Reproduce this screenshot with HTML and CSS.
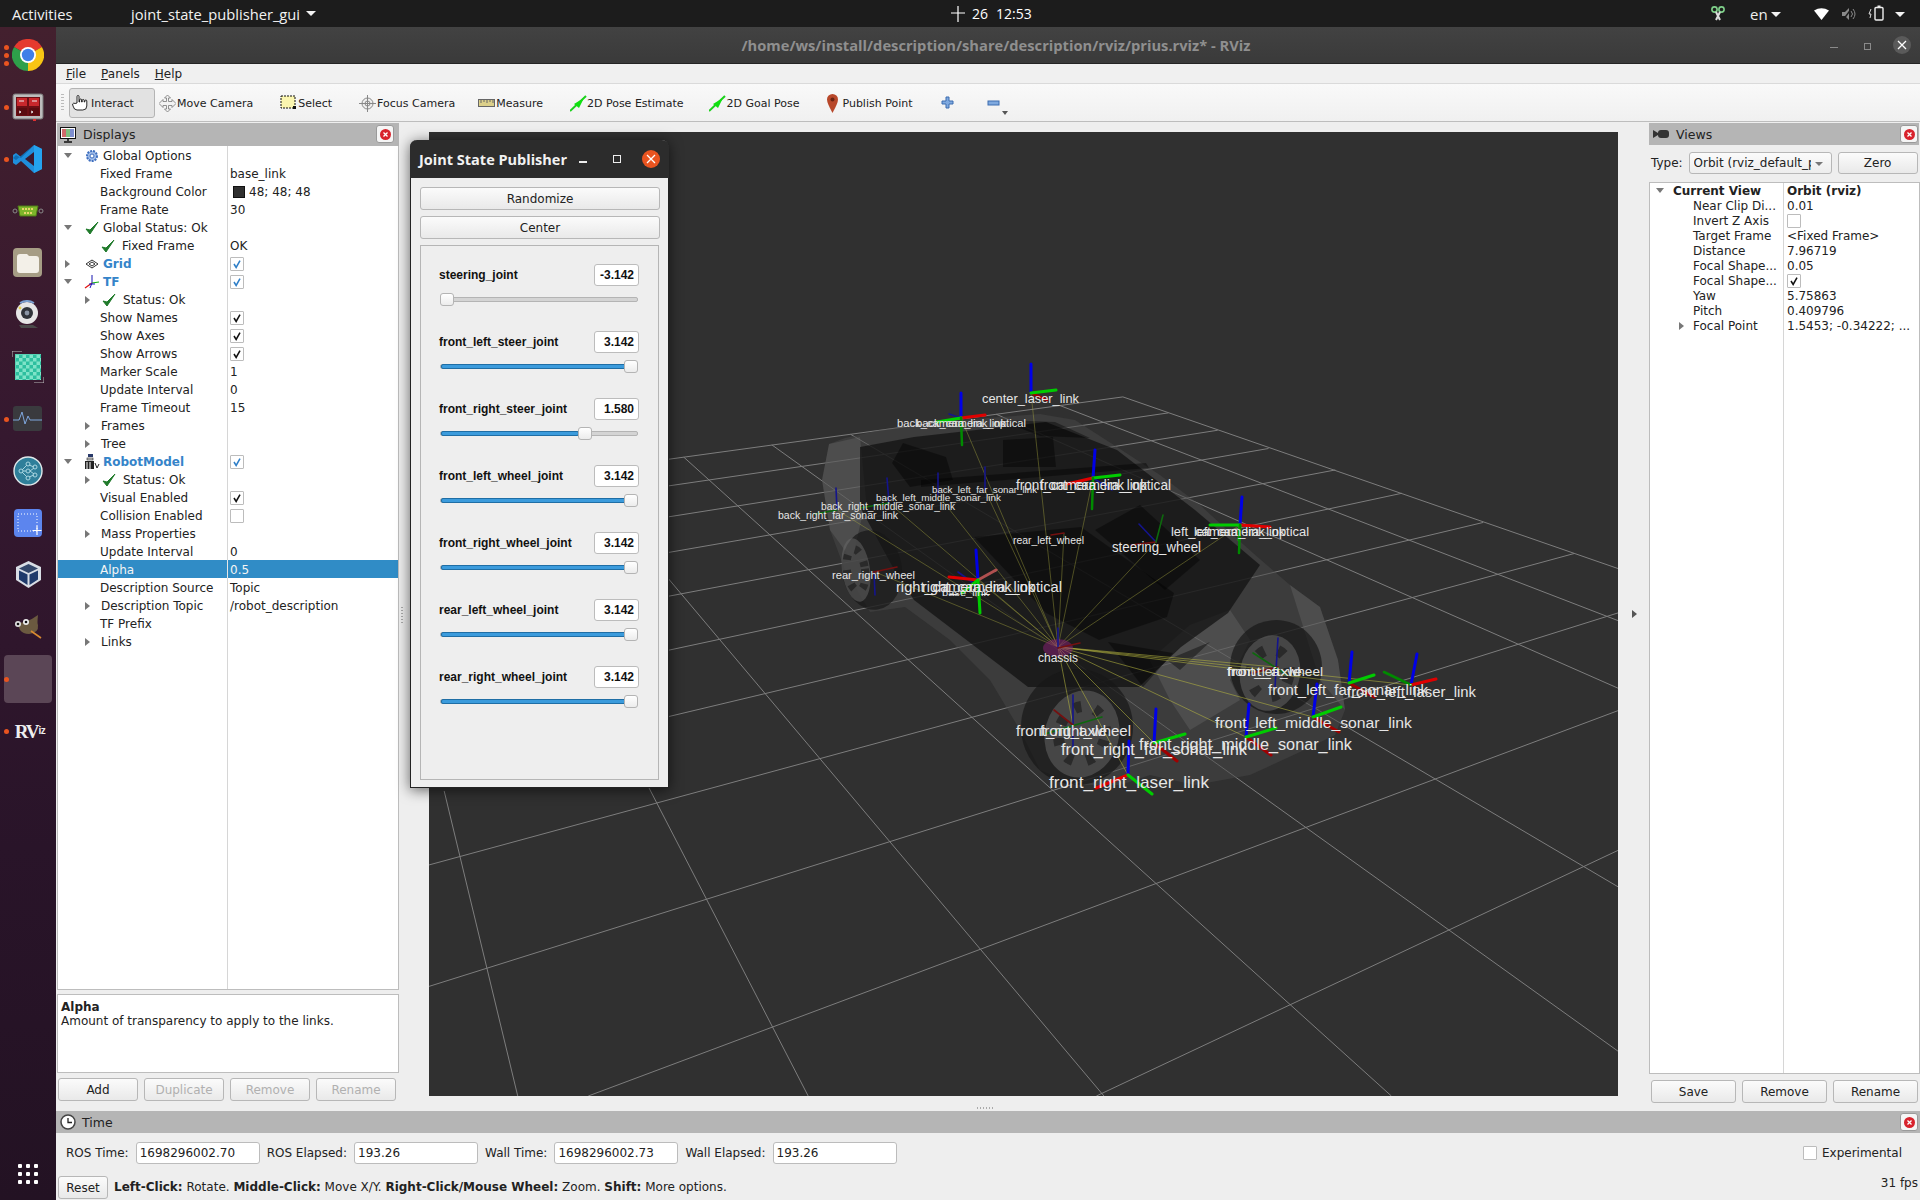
FILE: index.html
```html
<!DOCTYPE html>
<html lang="en">
<head>
<meta charset="utf-8">
<title>RViz</title>
<link rel="stylesheet" href="styles.css">
</head>
<body>
<header class="topbar">
  <span class="activities">Activities</span>
  <span class="appname">joint_state_publisher_gui<i class="caret"></i></span>
  <div class="clock">
    <svg class="clockplus" width="14" height="16" viewBox="0 0 14 16"><path d="M7 0v16M0 7h14" stroke="#fff" stroke-width="1.2"/></svg>
    <span>26</span><span class="time">12:53</span>
  </div>
  <div class="tray">
    <svg class="t-scissor" width="14" height="16" viewBox="0 0 14 16"><circle cx="3.5" cy="3.5" r="2.6" fill="none" stroke="#7fd08a" stroke-width="1.6"/><circle cx="10.5" cy="3.5" r="2.6" fill="none" stroke="#7fd08a" stroke-width="1.6"/><path d="M5 6l4 8M9 6l-4 8" stroke="#ddd" stroke-width="2"/></svg>
    <span class="t-en">en</span><i class="caret t-c1"></i>
    <svg class="t-wifi" width="15" height="12" viewBox="0 0 15 12"><path d="M0 2.5Q7.5-2 15 2.5L7.5 12Z" fill="#fff"/></svg>
    <svg class="t-vol" width="14" height="14" viewBox="0 0 14 14"><path d="M0 5h3l4-4v12l-4-4H0z" fill="#8a8a8a"/><path d="M9 4q3 3 0 6M11 2q4 5 0 10" stroke="#8a8a8a" fill="none"/><path d="M1 13L10 1" stroke="#1c1c1c" stroke-width="1.4"/></svg>
    <svg class="t-bat" width="16" height="16" viewBox="0 0 16 16"><path d="M3 4L1 9h2l-1 4" stroke="#ddd" fill="none"/><rect x="7" y="2.5" width="8" height="12.5" rx="1" fill="none" stroke="#eee" stroke-width="1.4"/><rect x="9.5" y="0.5" width="3" height="2" fill="#eee"/></svg>
    <i class="caret t-c2"></i>
  </div>
</header>

<div class="desktop">
  <nav class="dock">
    <div class="slot"><i class="dot d1"></i><i class="dot d2"></i><i class="dot d3"></i>
      <svg class="ico" width="32" height="32" viewBox="0 0 32 32"><path d="M16 16L2.1 8A16 16 0 0 1 29.9 8Z" fill="#e53a2f"/><path d="M16 16L29.9 8A16 16 0 0 1 16 32Z" fill="#f8c514"/><path d="M16 16L16 32A16 16 0 0 1 2.1 8Z" fill="#2ea04a"/><circle cx="16" cy="16" r="8" fill="#fff"/><circle cx="16" cy="16" r="6.2" fill="#3f7fe8"/></svg></div>
    <div class="slot"><i class="dot"></i>
      <svg class="ico" width="32" height="28" viewBox="0 0 32 28"><rect x="1" y="1" width="30" height="25" rx="2" fill="#bcbcbc" stroke="#777"/><rect x="4" y="4" width="24" height="19" fill="#6d0f14"/><rect x="5" y="5" width="10" height="8" fill="#c8282c"/><rect x="17" y="5" width="10" height="8" fill="#c8282c"/><rect x="5" y="15" width="10" height="7" fill="#5a0c10"/><rect x="17" y="15" width="10" height="7" fill="#5a0c10"/><path d="M7 8h5M20 8h5M7 18l2 1-2 1M19 18l2 1-2 1" stroke="#eee" fill="none"/><rect x="21" y="26" width="3" height="2" fill="#e03030"/></svg></div>
    <div class="slot"><i class="dot"></i>
      <svg class="ico" width="30" height="30" viewBox="0 0 30 30"><path d="M21 1l8 4v20l-8 4L8 17l-5 4-3-2v-8l3-2 5 4Z" fill="#1f8fdc"/><path d="M21 1l8 4v20l-8 4Z" fill="#24a3ef"/><path d="M21 8v14l-9-7Z" fill="#3a1a30"/><path d="M21 1L3 16l-3-2 3-3 5 3Z" fill="#0f6fb4"/></svg></div>
    <div class="slot">
      <svg class="ico" width="32" height="14" viewBox="0 0 32 14"><circle cx="3" cy="7" r="2" fill="none" stroke="#888"/><circle cx="29" cy="7" r="2" fill="none" stroke="#888"/><path d="M6 2h20l-2 10H8Z" fill="#7db52a" stroke="#4f7a18"/><path d="M10 5h12M12 9h8" stroke="#e6d56a" stroke-width="2" stroke-dasharray="2 1"/></svg></div>
    <div class="slot">
      <svg class="ico" width="30" height="30" viewBox="0 0 30 30"><rect width="29" height="29" rx="4" fill="#a69d85"/><path d="M4 9q0-3 3-3h7l2 2h7q3 0 3 3v11q0 3-3 3H7q-3 0-3-3Z" fill="#f3f0e8"/></svg></div>
    <div class="slot">
      <svg class="ico" width="26" height="30" viewBox="0 0 26 30"><circle cx="12" cy="13" r="11" fill="#e6e6e6"/><path d="M5 3q7-4 14 0" stroke="#7aa0d0" stroke-width="2" fill="none"/><circle cx="12" cy="13" r="6" fill="#30343a"/><circle cx="12" cy="13" r="2.4" fill="#8a95a5"/><circle cx="5" cy="8" r="1.4" fill="#e0d050"/><path d="M4 25h14l5 3H6Z" fill="#4a4a4a"/></svg></div>
    <div class="slot">
      <svg class="ico" width="32" height="32" viewBox="0 0 32 32"><defs><pattern id="chk" width="7" height="7" patternUnits="userSpaceOnUse"><rect width="7" height="7" fill="#2dbf9f"/><rect width="3.5" height="3.5" fill="#7fe3c8"/><rect x="3.5" y="3.5" width="3.5" height="3.5" fill="#7fe3c8"/></pattern></defs><rect x="3" y="3" width="26" height="26" fill="url(#chk)"/><path d="M0 6V0h10M32 26v6H22" stroke="#bbb" fill="none"/></svg></div>
    <div class="slot"><i class="dot"></i>
      <svg class="ico" width="30" height="26" viewBox="0 0 30 26"><rect width="29" height="25" rx="3" fill="#3a3a3e"/><path d="M0 14h6l3-8 3 12 3-8 2 4h12" stroke="#7fa7dd" fill="none"/></svg></div>
    <div class="slot">
      <svg class="ico" width="30" height="30" viewBox="0 0 30 30"><circle cx="15" cy="15" r="14" fill="#2f7f9a" stroke="#dfe8ea" stroke-width="1.4"/><g fill="none" stroke="#a9d5e0"><circle cx="8" cy="15" r="2"/><circle cx="15" cy="8" r="2"/><circle cx="15" cy="15" r="2"/><circle cx="15" cy="22" r="2"/><circle cx="22" cy="11" r="2"/><circle cx="22" cy="19" r="2"/><path d="M9 14l5-5M9 16l5 5M10 15h3M16 9l5 2M17 15l4-3M17 15l4 3M16 21l5-2"/></g></svg></div>
    <div class="slot">
      <svg class="ico" width="29" height="29" viewBox="0 0 29 29"><rect width="28" height="28" rx="4" fill="#5c85ee"/><rect x="4" y="5" width="19" height="17" fill="none" stroke="#fff" stroke-dasharray="1 2"/><path d="M23 17v9M18.500 21.500h9" stroke="#fff" stroke-width="1.2"/></svg></div>
    <div class="slot">
      <svg class="ico" width="27" height="30" viewBox="0 0 27 30"><path d="M13.500 1L26 7v13l-12.500 8L1 20V7Z" fill="#d8dde5"/><path d="M13.500 4L23 8.500 13.500 13 4 8.500Z" fill="#33476b"/><path d="M4 10.500l8.500 4V25L4 19.500ZM23 10.500l-8.500 4V25l8.500-5.500Z" fill="#1f3a6b"/></svg></div>
    <div class="slot">
      <svg class="ico" width="30" height="24" viewBox="0 0 30 24"><path d="M4 8Q14 8 25 0q-1 9 0 10 1 8-9 9-6 0-9-4Z" fill="#6b5a40"/><circle cx="5" cy="9" r="3" fill="#ddd"/><circle cx="13" cy="7" r="3" fill="#eee"/><circle cx="5" cy="9" r="1.300" fill="#111"/><circle cx="13" cy="7" r="1.300" fill="#111"/><path d="M18 16l10 7" stroke="#d98a30" stroke-width="1.600"/></svg></div>
    <div class="slot"><i class="dot dot-active"></i><div class="active"></div></div>
    <div class="slot"><i class="dot"></i><span class="rvizlogo">RV<small>iz</small></span></div>
    <svg class="grid9" width="21" height="21" viewBox="0 0 21 21"><g fill="#fff"><rect width="4" height="4" rx="1"/><rect x="8" width="4" height="4" rx="1"/><rect x="16" width="4" height="4" rx="1"/><rect y="8" width="4" height="4" rx="1"/><rect x="8" y="8" width="4" height="4" rx="1"/><rect x="16" y="8" width="4" height="4" rx="1"/><rect y="16" width="4" height="4" rx="1"/><rect x="8" y="16" width="4" height="4" rx="1"/><rect x="16" y="16" width="4" height="4" rx="1"/></g></svg>
  </nav>

  <div class="window">
    <div class="titlebar">
      <span class="wintitle">/home/ws/install/description/share/description/rviz/prius.rviz* - RViz</span>
      <i class="w-min"></i><i class="w-max"></i>
      <span class="w-close"><svg width="10" height="10" viewBox="0 0 10 10"><path d="M1 1l8 8M9 1l-8 8" stroke="#fff" stroke-width="1.300"/></svg></span>
    </div>
    <div class="menubar"><span><u>F</u>ile</span><span><u>P</u>anels</span><span><u>H</u>elp</span></div>
    <div class="toolbar">
      <i class="handle"></i>
      <div class="tool tool-on">
        <svg width="18" height="18" viewBox="0 0 18 18"><path d="M5 9V2.500a1 1 0 0 1 2 0V8h.6V6a1 1 0 0 1 2 0v2h.6V6.500a1 1 0 0 1 2 0V8h.6V7a1 1 0 0 1 2 0v5q0 4-4 4H5q-3 0-4-4l-.4-2q1-1.500 2.500-.5Z" fill="#fff" stroke="#111" stroke-width=".9"/></svg>
        <span>Interact</span></div>
      <div class="tool t-move">
        <svg width="17" height="17" viewBox="0 0 17 17"><path d="M8.500 0l3 3h-2v3.500H13v-2l4 4-4 4v-2H9.500V14h2l-3 3-3-3h2v-3.500H4v2l-4-4 4-4v2h3.500V3h-2Z" fill="#f2f2f2" stroke="#777" stroke-width=".8"/></svg>
        <span>Move Camera</span></div>
      <div class="tool">
        <svg width="17" height="17" viewBox="0 0 17 17"><rect x="1" y="1" width="14" height="12" fill="#fbf6b0" stroke="#111" stroke-dasharray="2 1"/><rect x="13" y="11" width="3" height="3" fill="#111"/></svg>
        <span>Select</span></div>
      <div class="tool">
        <svg width="17" height="17" viewBox="0 0 17 17"><circle cx="8.500" cy="8.500" r="5.500" fill="#eee" stroke="#888"/><circle cx="8.500" cy="8.500" r="2.500" fill="none" stroke="#888"/><path d="M8.500 0v17M0 8.500h17" stroke="#888"/></svg>
        <span>Focus Camera</span></div>
      <div class="tool t-measure">
        <svg width="17" height="9" viewBox="0 0 17 9"><rect x=".5" y=".5" width="16" height="7" fill="#dcd08a" stroke="#666"/><path d="M3 1v3M6 1v2M9 1v3M12 1v2M15 1v3" stroke="#666"/></svg>
        <span>Measure</span></div>
      <div class="tool t-arrow">
        <svg width="17" height="17" viewBox="0 0 17 17"><path d="M0 16L16 1" stroke="#1bd11b" stroke-width="2"/><path d="M4 9l5 4 5-10Z" fill="#11e011"/></svg>
        <span>2D Pose Estimate</span></div>
      <div class="tool t-arrow">
        <svg width="17" height="17" viewBox="0 0 17 17"><path d="M0 16L16 1" stroke="#1bd11b" stroke-width="2"/><path d="M4 9l5 4 5-10Z" fill="#11e011"/></svg>
        <span>2D Goal Pose</span></div>
      <div class="tool t-pin">
        <svg width="11" height="19" viewBox="0 0 11 19"><path d="M5.500 19Q0 9 0 5.500a5.500 5.500 0 0 1 11 0Q11 9 5.500 19Z" fill="#b8482a"/><circle cx="5.500" cy="5.500" r="2" fill="#6a2412"/></svg>
        <span>Publish Point</span></div>
      <div class="tool t-ic"><svg width="14" height="14" viewBox="0 0 14 14"><path d="M5 1h3v4h4v3H8v4H5V8H1V5h4Z" fill="#7fa9df" stroke="#3c6cb0"/></svg></div>
      <div class="tool t-ic t-minus"><svg width="14" height="6" viewBox="0 0 14 6"><rect x="1" y="1" width="11" height="4" fill="#7fa9df" stroke="#3c6cb0"/></svg></div>
      <i class="more"></i>
    </div>

    <div class="main">
      <section class="displays">
        <div class="dockhead">
          <svg width="16" height="16" viewBox="0 0 16 16"><rect x=".5" y=".5" width="15" height="11" fill="#fff" stroke="#111"/><rect x="2" y="2" width="4" height="8" fill="#d06a6a"/><rect x="6" y="2" width="4" height="8" fill="#7fc07f"/><rect x="10" y="2" width="4" height="8" fill="#7f8fd0"/><path d="M8 12v2M4 15h8" stroke="#111" stroke-width="1.500"/></svg>
          <span>Displays</span>
          <span class="closebtn"><svg width="11" height="11" viewBox="0 0 11 11"><circle cx="5.500" cy="5.500" r="5.500" fill="#d8222c"/><path d="M3.500 3.500l4 4M7.500 3.500l-4 4" stroke="#fff" stroke-width="1.300"/></svg></span>
        </div>
        <div class="tree">
          <div class="row"><div class="name l0"><i class="ar down"></i><svg class="ricon" width="14" height="14" viewBox="0 0 14 14"><circle cx="7" cy="7" r="5" fill="#9fbce8" stroke="#3f6fbf" stroke-width="2" stroke-dasharray="2 1"/><circle cx="7" cy="7" r="2" fill="#fff" stroke="#3f6fbf"/></svg><span>Global Options</span></div><div class="val"></div></div>
          <div class="row"><div class="name l1">Fixed Frame</div><div class="val">base_link</div></div>
          <div class="row"><div class="name l1">Background Color</div><div class="val"><i class="swatch"></i>48; 48; 48</div></div>
          <div class="row"><div class="name l1">Frame Rate</div><div class="val">30</div></div>
          <div class="row"><div class="name l0"><i class="ar down"></i><svg class="ricon" width="14" height="14" viewBox="0 0 14 14"><path d="M1 8l4 5L13 1 5 9Z" fill="#1f7a2a" stroke="#1f7a2a"/></svg><span>Global Status: Ok</span></div><div class="val"></div></div>
          <div class="row"><div class="name lc"><svg class="ricon2" width="14" height="14" viewBox="0 0 14 14"><path d="M1 8l4 5L13 1 5 9Z" fill="#1f7a2a" stroke="#1f7a2a"/></svg><span>Fixed Frame</span></div><div class="val">OK</div></div>
          <div class="row"><div class="name l0"><i class="ar right"></i><svg class="ricon" width="14" height="10" viewBox="0 0 14 10"><path d="M7 1l6 4-6 4-6-4ZM4 5l3-2 3 2-3 2Z" fill="none" stroke="#333"/></svg><span class="on">Grid</span></div><div class="val"><svg class="cb" viewBox="0 0 14 14"><path class="ck-b" d="M3.500 7l2.500 4 4.500-8"/></svg></div></div>
          <div class="row"><div class="name l0"><i class="ar down"></i><svg class="ricon" width="16" height="14" viewBox="0 0 16 14"><path d="M8 8V0" stroke="#1515b0"/><path d="M8 8l7-1" stroke="#10b010" stroke-width="1.200"/><path d="M8 8L1 13" stroke="#e01010" stroke-width="1.200"/><path d="M8 8l-2 5M5 9h6" stroke="#1a1ac0"/></svg><span class="on">TF</span></div><div class="val"><svg class="cb" viewBox="0 0 14 14"><path class="ck-b" d="M3.500 7l2.500 4 4.500-8"/></svg></div></div>
          <div class="row"><div class="name lca"><i class="ar right"></i><svg class="ricon2" width="14" height="14" viewBox="0 0 14 14"><path d="M1 8l4 5L13 1 5 9Z" fill="#1f7a2a" stroke="#1f7a2a"/></svg><span>Status: Ok</span></div><div class="val"></div></div>
          <div class="row"><div class="name l1">Show Names</div><div class="val"><svg class="cb" viewBox="0 0 14 14"><path class="ck" d="M3.500 7l2.500 4 4.500-8"/></svg></div></div>
          <div class="row"><div class="name l1">Show Axes</div><div class="val"><svg class="cb" viewBox="0 0 14 14"><path class="ck" d="M3.500 7l2.500 4 4.500-8"/></svg></div></div>
          <div class="row"><div class="name l1">Show Arrows</div><div class="val"><svg class="cb" viewBox="0 0 14 14"><path class="ck" d="M3.500 7l2.500 4 4.500-8"/></svg></div></div>
          <div class="row"><div class="name l1">Marker Scale</div><div class="val">1</div></div>
          <div class="row"><div class="name l1">Update Interval</div><div class="val">0</div></div>
          <div class="row"><div class="name l1">Frame Timeout</div><div class="val">15</div></div>
          <div class="row"><div class="name la"><i class="ar right"></i>Frames</div><div class="val"></div></div>
          <div class="row"><div class="name la"><i class="ar right"></i>Tree</div><div class="val"></div></div>
          <div class="row"><div class="name l0"><i class="ar down"></i><svg class="ricon" width="16" height="15" viewBox="0 0 16 15"><rect x="4" y="0" width="5" height="3" fill="#2a3a6a"/><rect x="3" y="4" width="6" height="2" fill="#ccc" stroke="#222" stroke-width=".6"/><rect x="1" y="7" width="9" height="8" fill="#222"/><path d="M3 8v7M6 8v7" stroke="#fff"/><path d="M11 9l2 5 2-4" stroke="#222" fill="none"/></svg><span class="on">RobotModel</span></div><div class="val"><svg class="cb" viewBox="0 0 14 14"><path class="ck-b" d="M3.500 7l2.500 4 4.500-8"/></svg></div></div>
          <div class="row"><div class="name lca"><i class="ar right"></i><svg class="ricon2" width="14" height="14" viewBox="0 0 14 14"><path d="M1 8l4 5L13 1 5 9Z" fill="#1f7a2a" stroke="#1f7a2a"/></svg><span>Status: Ok</span></div><div class="val"></div></div>
          <div class="row"><div class="name l1">Visual Enabled</div><div class="val"><svg class="cb" viewBox="0 0 14 14"><path class="ck" d="M3.500 7l2.500 4 4.500-8"/></svg></div></div>
          <div class="row"><div class="name l1">Collision Enabled</div><div class="val"><svg class="cb" viewBox="0 0 14 14"></svg></div></div>
          <div class="row"><div class="name la"><i class="ar right"></i>Mass Properties</div><div class="val"></div></div>
          <div class="row"><div class="name l1">Update Interval</div><div class="val">0</div></div>
          <div class="row sel"><div class="name l1">Alpha</div><div class="val">0.5</div></div>
          <div class="row"><div class="name l1">Description Source</div><div class="val">Topic</div></div>
          <div class="row"><div class="name la"><i class="ar right"></i>Description Topic</div><div class="val">/robot_description</div></div>
          <div class="row"><div class="name l1">TF Prefix</div><div class="val"></div></div>
          <div class="row"><div class="name la"><i class="ar right"></i>Links</div><div class="val"></div></div>
          <div class="row fill"><div class="name"></div><div class="val"></div></div>
        </div>
        <div class="desc"><b>Alpha</b><span>Amount of transparency to apply to the links.</span></div>
        <div class="btnrow b4"><button class="btn">Add</button><button class="btn dis">Duplicate</button><button class="btn dis">Remove</button><button class="btn dis">Rename</button></div>
      </section>

      <section class="viewwrap">
        <svg class="scene" viewBox="429 132 1189 964">
          <rect x="429" y="132" width="1189" height="964" fill="#303030"/>
          <g transform="translate(429 380) scale(.75837 .45663)">
            <path class="gridl" d="M200 200L915 37M200 260L975 72M200 330L1040 110M200 411L1107 150M200 510L1195 197M200 633L1283 248M200 783L1390 312M0 1062L1510 380M0 1328L1568 510M210 1568L1568 724M880 1568L1568 1030M20 900L117 1568M290 893L500 1568M197 201L890 1568M336 169L1269 1568M452 142L1568 1470M556 119L1568 1110M748 75L1568 675M832 56L1568 527M915 37L1568 413"/>
          </g>
          <!-- car -->
          <polygon class="car-body" points="829,444 845,438 880,430 960,420 1040,414 1075,420 1117,447 1160,475 1200,505 1224,527 1253,553 1290,585 1320,607 1338,660 1345,710 1335,735 1300,752 1250,775 1195,785 1150,775 1120,785 1075,785 1040,770 1020,730 990,680 950,640 905,607 870,612 845,570 830,530 822,480"/>
          <polygon class="car-light" points="822,480 829,444 860,437 866,500 852,560 830,530"/>
          <polygon class="car-light" points="1150,660 1190,625 1230,610 1250,640 1230,680 1240,700 1190,730 1170,700"/>
          <polygon class="car-light" points="1290,585 1320,607 1338,660 1345,710 1320,680"/>
          <polygon class="car-cabin" points="860,447 914,437 1046,422 1117,450 1195,510 1260,565 1228,613 1181,647 1139,687 1028,687 914,600 896,573 860,507"/>
          <polygon class="car-dark" points="903,443 946,457 953,480 910,487 892,463"/>
          <polygon class="car-dark" points="921,480 1146,463 1149,468 921,487"/>
          <polygon class="car-dark" points="1003,440 1053,437 1056,467 1003,467"/>
          <polygon class="car-dark" points="974,537 1081,527 1174,593 1167,617 1099,640 1046,613"/>
          <polygon class="car-dark" points="1000,420 1055,422 1090,438 1040,436"/>
          <polygon class="car-dark" points="1167,660 1210,642 1180,670"/>
          <polygon class="car-dark" points="1108,642 1173,653 1143,687"/>
          <polygon class="car-dark" points="1095,530 1140,505 1200,560 1165,590"/>
          <g>
            <ellipse class="tyre" cx="872" cy="570" rx="30" ry="40" transform="rotate(-8 872 570)"/>
            <ellipse class="rim" cx="856" cy="570" rx="14" ry="32" transform="rotate(-8 856 570)"/>
            <ellipse class="spoke s-small" cx="856" cy="570" rx="9" ry="21" transform="rotate(-8 856 570)"/>
            <ellipse class="tyre" cx="1077" cy="727" rx="56" ry="58"/>
            <ellipse class="rim" cx="1082" cy="734" rx="37" ry="44" transform="rotate(15 1082 734)"/>
            <ellipse class="spoke" cx="1082" cy="734" rx="23" ry="28" transform="rotate(15 1082 734)"/>
            <ellipse class="tyre" cx="1276" cy="667" rx="46" ry="47"/>
            <ellipse class="rim" cx="1270" cy="673" rx="30" ry="38" transform="rotate(10 1270 673)"/>
            <ellipse class="spoke" cx="1270" cy="673" rx="19" ry="24" transform="rotate(10 1270 673)"/>
          </g>
          <!-- tf links -->
          <path class="yl" d="M1058 647L1031 393M1058 647L961 418M1058 647L1093 478M1058 647L1240 525M1058 647L978 580M1058 647L1156 542M1058 647L1064 533M1058 647L875 572M1058 647L837 510M1058 647L889 503M1058 647L938 495M1058 647L985 490"/>
          <path class="yl2" d="M1058 647L1128 775M1058 647L1154 743M1058 647L1246 737M1058 647L1313 717M1058 647L1349 683M1058 647L1411 685M1058 647L1275 667M1058 647L1073 725"/>
          <ellipse class="chassis" cx="1058" cy="648" rx="15" ry="9"/>
          <!-- dim axes -->
          <path class="db" d="M1073 695V747M1278 638L1275 687M836 488L837 510M887 478L889 503M938 473V495M985 467V490M874 572L875 595M1139 524L1156 542M949 414L961 418M1112 490L1093 478M958 572L976 585M1058 628V648"/>
          <path class="dr" d="M1054 710L1073 725M1252 673L1278 667M874 572L897 567M1131 545L1156 542M1051 535L1064 533M1058 648L1080 643"/>
          <path class="dg" d="M1045 734L1102 717M1253 653L1287 675M1163 515L1156 542M815 514L837 510M889 503L860 508"/>
          <!-- bright axes -->
          <path class="ab" d="M1031 393V364M961 418V393M1093 478L1095 450M1240 525L1242 497M978 580L976 550M1128 775L1129 741M1154 743L1156 709M1246 737L1249 704M1313 717L1317 684M1349 683L1352 652M1411 685L1417 654"/>
          <path class="ar2" d="M961 418L985 415M1093 478L1067 484M1240 525L1270 527M978 580L949 577M1128 775L1096 788M1411 685L1436 679"/>
          <path class="adr" d="M1031 393L1047 400M1154 743L1177 761M1246 737L1271 755M1313 717L1339 732M1349 683L1374 697"/>
          <path class="apk" d="M978 580L996 570"/>
          <path class="ag" d="M1031 393L1056 390M961 418L937 422M1093 478L1120 475M1240 525L1210 525M978 580L962 593M978 580L980 613M1154 743L1185 734M1246 737L1276 728M1313 717L1341 707M1349 683L1374 675M1128 775L1152 794M1240 525L1239 540"/>
          <path class="adg" d="M1411 685L1384 672M1093 478L1092 509M961 418L962 445M1240 525L1239 553"/>
          <!-- labels -->
          <g class="lbls">
            <text x="982" y="403" font-size="13" textLength="97" lengthAdjust="spacingAndGlyphs">center_laser_link</text>
            <text x="897" y="427" font-size="11" textLength="129" lengthAdjust="spacingAndGlyphs">back_camera_link_optical</text>
            <text x="916" y="427" font-size="11" textLength="90" lengthAdjust="spacingAndGlyphs">back_camera_link</text>
            <text x="1016" y="490" font-size="14" textLength="155" lengthAdjust="spacingAndGlyphs">front_camera_link_optical</text>
            <text x="1040" y="490" font-size="14" textLength="107" lengthAdjust="spacingAndGlyphs">front_camera_link</text>
            <text x="1171" y="536" font-size="12" textLength="138" lengthAdjust="spacingAndGlyphs">left_camera_link_optical</text>
            <text x="1194" y="536" font-size="12" textLength="91" lengthAdjust="spacingAndGlyphs">left_camera_link</text>
            <text x="896" y="592" font-size="14.500" textLength="166" lengthAdjust="spacingAndGlyphs">right_camera_link_optical</text>
            <text x="922" y="592" font-size="14.500" textLength="113" lengthAdjust="spacingAndGlyphs">right_camera_link</text>
            <text x="942" y="596" font-size="9" textLength="47" lengthAdjust="spacingAndGlyphs">base_link</text>
            <text x="1112" y="552" font-size="14" textLength="89" lengthAdjust="spacingAndGlyphs">steering_wheel</text>
            <text x="1013" y="544" font-size="10" textLength="71" lengthAdjust="spacingAndGlyphs">rear_left_wheel</text>
            <text x="832" y="579" font-size="11" textLength="83" lengthAdjust="spacingAndGlyphs">rear_right_wheel</text>
            <text x="778" y="519" font-size="10" textLength="120" lengthAdjust="spacingAndGlyphs">back_right_far_sonar_link</text>
            <text x="821" y="510" font-size="10" textLength="134" lengthAdjust="spacingAndGlyphs">back_right_middle_sonar_link</text>
            <text x="876" y="501" font-size="9.500" textLength="125" lengthAdjust="spacingAndGlyphs">back_left_middle_sonar_link</text>
            <text x="932" y="493" font-size="9" textLength="105" lengthAdjust="spacingAndGlyphs">back_left_far_sonar_link</text>
            <text x="1038" y="662" font-size="12" textLength="40" lengthAdjust="spacingAndGlyphs">chassis</text>
            <text x="1227" y="676" font-size="13" textLength="75" lengthAdjust="spacingAndGlyphs">front_axle</text>
            <text x="1227" y="676" font-size="13" textLength="96" lengthAdjust="spacingAndGlyphs">front_left_wheel</text>
            <text x="1016" y="736" font-size="14" textLength="115" lengthAdjust="spacingAndGlyphs">front_right_wheel</text>
            <text x="1040" y="736" font-size="14" textLength="67" lengthAdjust="spacingAndGlyphs">front_axle</text>
            <text x="1268" y="695" font-size="14.500" textLength="160" lengthAdjust="spacingAndGlyphs">front_left_far_sonar_link</text>
            <text x="1347" y="697" font-size="14.500" textLength="129" lengthAdjust="spacingAndGlyphs">front_left_laser_link</text>
            <text x="1215" y="728" font-size="15.500" textLength="197" lengthAdjust="spacingAndGlyphs">front_left_middle_sonar_link</text>
            <text x="1139" y="750" font-size="16" textLength="213" lengthAdjust="spacingAndGlyphs">front_right_middle_sonar_link</text>
            <text x="1061" y="755" font-size="16" textLength="186" lengthAdjust="spacingAndGlyphs">front_right_far_sonar_link</text>
            <text x="1049" y="788" font-size="17" textLength="160" lengthAdjust="spacingAndGlyphs">front_right_laser_link</text>
          </g>
        </svg>
        <i class="splitdots"></i>
        <i class="collapse"></i>
        <i class="hsplit"></i>
      </section>

      <section class="views">
        <div class="dockhead vh">
          <svg width="16" height="8" viewBox="0 0 16 8"><path d="M0 0l5 3v2l-5 3Z" fill="#333"/><rect x="5" y="0" width="11" height="8" rx="3" fill="#333"/></svg>
          <span>Views</span>
          <span class="closebtn"><svg width="11" height="11" viewBox="0 0 11 11"><circle cx="5.500" cy="5.500" r="5.500" fill="#d8222c"/><path d="M3.500 3.500l4 4M7.500 3.500l-4 4" stroke="#fff" stroke-width="1.300"/></svg></span>
        </div>
        <div class="typerow">
          <span>Type:</span>
          <div class="combo"><span class="combotxt">Orbit (rviz_default_plugins)</span><i class="comboar"></i></div>
          <button class="btn zero">Zero</button>
        </div>
        <div class="vtree">
          <div class="vrow hd"><div class="vn v0"><i class="ar down"></i>Current View</div><div class="vv">Orbit (rviz)</div></div>
          <div class="vrow"><div class="vn">Near Clip Di...</div><div class="vv">0.01</div></div>
          <div class="vrow"><div class="vn">Invert Z Axis</div><div class="vv"><svg class="cb" viewBox="0 0 14 14"></svg></div></div>
          <div class="vrow"><div class="vn">Target Frame</div><div class="vv">&lt;Fixed Frame&gt;</div></div>
          <div class="vrow"><div class="vn">Distance</div><div class="vv">7.96719</div></div>
          <div class="vrow"><div class="vn">Focal Shape...</div><div class="vv">0.05</div></div>
          <div class="vrow"><div class="vn">Focal Shape...</div><div class="vv"><svg class="cb" viewBox="0 0 14 14"><path class="ck" d="M3.500 7l2.500 4 4.500-8"/></svg></div></div>
          <div class="vrow"><div class="vn">Yaw</div><div class="vv">5.75863</div></div>
          <div class="vrow"><div class="vn">Pitch</div><div class="vv">0.409796</div></div>
          <div class="vrow"><div class="vn v1"><i class="ar right"></i>Focal Point</div><div class="vv">1.5453; -0.34222; ...</div></div>
          <div class="vrow fill"><div class="vn"></div><div class="vv"></div></div>
        </div>
        <div class="btnrow b3"><button class="btn">Save</button><button class="btn">Remove</button><button class="btn">Rename</button></div>
      </section>
    </div>

    <section class="timepanel">
      <div class="dockhead th">
        <svg width="16" height="16" viewBox="0 0 16 16"><circle cx="8" cy="8" r="7" fill="#fff" stroke="#444" stroke-width="1.500"/><path d="M8 4v4.500h4" stroke="#222" stroke-width="1.300" fill="none"/></svg>
        <span>Time</span>
        <span class="closebtn"><svg width="11" height="11" viewBox="0 0 11 11"><circle cx="5.500" cy="5.500" r="5.500" fill="#d8222c"/><path d="M3.500 3.500l4 4M7.500 3.500l-4 4" stroke="#fff" stroke-width="1.300"/></svg></span>
      </div>
      <div class="timerow">
        <span>ROS Time:</span><div class="tinput">1698296002.70</div>
        <span>ROS Elapsed:</span><div class="tinput">193.26</div>
        <span>Wall Time:</span><div class="tinput">1698296002.73</div>
        <span>Wall Elapsed:</span><div class="tinput">193.26</div>
        <div class="exp"><svg class="cb" viewBox="0 0 14 14"></svg><span>Experimental</span></div>
      </div>
      <div class="statusrow">
        <button class="btn reset">Reset</button>
        <span class="hint"><b>Left-Click:</b> Rotate. <b>Middle-Click:</b> Move X/Y. <b>Right-Click/Mouse Wheel:</b> Zoom. <b>Shift:</b> More options.</span>
        <span class="fps">31 fps</span>
      </div>
    </section>
  </div>
</div>

<aside class="jsp">
  <div class="jsp-title">
    <span class="jsp-name">Joint State Publisher</span>
    <i class="jsp-min"></i><i class="jsp-max"></i>
    <span class="jsp-close"><svg width="10" height="10" viewBox="0 0 10 10"><path d="M1 1l8 8M9 1l-8 8" stroke="#fff" stroke-width="1.300"/></svg></span>
  </div>
  <div class="jsp-body">
    <button class="btn jbtn">Randomize</button>
    <button class="btn jbtn">Center</button>
    <div class="jbox">
      <div class="joint"><div class="jtop"><span>steering_joint</span><div class="jval">-3.142</div></div><div class="slider"><div class="fillbar" style="width:0%"></div><i class="knob"></i></div></div>
      <div class="joint"><div class="jtop"><span>front_left_steer_joint</span><div class="jval">3.142</div></div><div class="slider"><div class="fillbar" style="width:100%"></div><i class="knob"></i></div></div>
      <div class="joint"><div class="jtop"><span>front_right_steer_joint</span><div class="jval">1.580</div></div><div class="slider"><div class="fillbar" style="width:70.5%"></div><i class="knob"></i></div></div>
      <div class="joint"><div class="jtop"><span>front_left_wheel_joint</span><div class="jval">3.142</div></div><div class="slider"><div class="fillbar" style="width:100%"></div><i class="knob"></i></div></div>
      <div class="joint"><div class="jtop"><span>front_right_wheel_joint</span><div class="jval">3.142</div></div><div class="slider"><div class="fillbar" style="width:100%"></div><i class="knob"></i></div></div>
      <div class="joint"><div class="jtop"><span>rear_left_wheel_joint</span><div class="jval">3.142</div></div><div class="slider"><div class="fillbar" style="width:100%"></div><i class="knob"></i></div></div>
      <div class="joint"><div class="jtop"><span>rear_right_wheel_joint</span><div class="jval">3.142</div></div><div class="slider"><div class="fillbar" style="width:100%"></div><i class="knob"></i></div></div>
    </div>
  </div>
</aside>
</body>
</html>
```
FILE: styles.css
```css
* { box-sizing: border-box; }
html, body { margin: 0; height: 100%; }
body { width: 1920px; height: 1200px; overflow: hidden; position: relative; background: #1c1c1c;
  font: 12px/1 "DejaVu Sans", sans-serif; color: #222; }
i { display: block; font-style: normal; }
button { font: inherit; margin: 0; }

/* top bar */
.topbar { height: 27px; background: #1c1c1c; color: #f2f2f2; display: flex; align-items: center; position: relative;
  font: 14.700px "Open Sans", sans-serif; }
.activities { margin-left: 12px; width: 119px; }
.appname { display: flex; align-items: center; }
.caret { width: 0; height: 0; border: 5px solid transparent; border-top: 5px solid #f2f2f2; border-bottom: 0; margin-left: 6px; }
.clock { position: absolute; left: 951px; top: 0; height: 27px; display: flex; align-items: center; gap: 8px; font-size: 14px; color: #fff; }
.clockplus { margin-right: -1px; }
.tray { position: absolute; left: 0; top: 0; height: 27px; width: 1920px; }
.tray > * { position: absolute; }
.t-scissor { left: 1711px; top: 6px; }
.t-en { left: 1750px; top: 4px; font-size: 15px; color: #eee; }
.t-c1 { left: 1765px; top: 12px; }
.t-wifi { left: 1814px; top: 8px; }
.t-vol { left: 1842px; top: 7px; }
.t-bat { left: 1868px; top: 5px; }
.t-c2 { left: 1889px; top: 12px; }

.desktop { display: flex; height: 1173px; }

/* dock */
.dock { width: 56px; padding-top: 2px; background: linear-gradient(#43202e, #35182f 35%, #291429 70%, #231223); display: flex; flex-direction: column; align-items: center; position: relative; }
.slot { height: 52px; width: 56px; display: flex; align-items: center; justify-content: center; position: relative; flex: none; }
.dot { position: absolute; left: 4px; top: 24px; width: 5px; height: 5px; border-radius: 50%; background: #e95420; }
.d1 { top: 16px; } .d2 { top: 24px; } .d3 { top: 32px; }
.dot-active { z-index: 1; }
.active { width: 48px; height: 48px; border-radius: 4px; background: #5b4656; }
.rvizlogo { font: bold 19px "Liberation Serif", serif; color: #eee; letter-spacing: -2px; line-height: 1; margin-left: 4px; }
.rvizlogo small { font: bold 10px "Liberation Sans", sans-serif; letter-spacing: -.5px; vertical-align: 4px; margin-left: 1px; }
.grid9 { position: absolute; left: 18px; bottom: 15px; }

/* window */
.window { width: 1864px; height: 1173px; background: #eeeeee; display: flex; flex-direction: column; }
.titlebar { height: 37px; background: linear-gradient(#424242, #3a3a3a); border-bottom: 1px solid #242424; position: relative; display: flex; align-items: center; justify-content: center; flex: none; }
.wintitle { font: bold 14.700px "Open Sans", sans-serif; color: #8f8f8f; margin-left: 16px; }
.w-min { position: absolute; left: 1774px; top: 20px; width: 8px; height: 1px; background: #8a8a8a; }
.w-max { position: absolute; left: 1808px; top: 16px; width: 7px; height: 7px; border: 1px solid #8a8a8a; }
.w-close { position: absolute; left: 1837px; top: 9px; width: 18px; height: 18px; border-radius: 50%; background: #5a5a5a; display: flex; align-items: center; justify-content: center; }
.menubar { height: 20px; background: #f0f0f0; border-bottom: 1px solid #dadada; display: flex; align-items: center; padding-left: 10px; gap: 15px; flex: none; }
.toolbar { height: 38px; background: linear-gradient(#f9f9f9, #f0f0f0); border-bottom: 1px solid #bdbdbd; display: flex; align-items: center; padding: 1px 0 0 5px; flex: none; position: relative; font-size: 11px; }
.handle { width: 3px; height: 18px; margin-right: 5px; background: repeating-linear-gradient(#bbb 0 1px, transparent 1px 3px); }
.tool { display: flex; align-items: center; gap: 1px; padding: 0 0 0 3px; margin-right: 24px; height: 30px; }
.tool span { padding-top: 1px; }
.tool-on { width: 86px; background: #e2e2e2; border: 1px solid #b4b4b4; border-radius: 3px; margin-right: 0; padding-left: 2px; gap: 1px; }
.t-move { margin-left: 1px; }
.t-measure { margin-left: -4px; gap: 1px; }
.t-arrow { gap: 0; margin-right: 23px; }
.t-pin { padding-left: 0; margin-left: 5px; margin-right: 26px; gap: 4px; }
.t-ic { margin-right: 30px; padding-left: 0; }
.t-ic svg { margin-left: 2px; }
.more { position: absolute; left: 946px; top: 27px; width: 0; height: 0; border: 3px solid transparent; border-top: 4px solid #555; border-bottom: 0; }

.main { height: 989px; display: flex; flex: none; }

/* displays */
.displays { width: 342px; margin-left: 1px; padding-top: 1px; display: flex; flex-direction: column; flex: none; }
.dockhead { height: 23px; background: #b5b5b5; display: flex; align-items: center; padding-left: 3px; gap: 7px; flex: none; font-size: 12.500px; position: relative; }
.dockhead > span:not(.closebtn) { padding-top: 2px; }
.closebtn { position: absolute; right: 4px; top: 2px; width: 18px; height: 18px; background: #f5f5f5; border: 1px solid #9a9a9a; border-radius: 3px; display: flex; align-items: center; justify-content: center; }
.displays .closebtn { right: 5px; }
.tree { height: 844px; flex: none; background: #fff; border: 1px solid #bdbdbd; border-top: 0; display: flex; flex-direction: column; }
.row { display: grid; grid-template-columns: 170px 1fr; height: 18px; flex: none; }
.row .name { border-right: 1px solid #d6d6d6; display: flex; align-items: center; white-space: nowrap; padding-top: 1px; }
.row .val { display: flex; align-items: center; padding-left: 2px; white-space: nowrap; padding-top: 1px; }
.row.fill { flex: 1; }
.row.sel { background: #308cc6; color: #f4f4f4; }
.row.sel .name { border-right-color: #e6e6e6; }
.l0 { padding-left: 5px; }
.l1 { padding-left: 42px; }
.la { padding-left: 25px; }
.la .ar { margin-right: 11px; }
.lc { padding-left: 43px; }
.lca { padding-left: 25px; }
.lca .ar { margin-right: 12px; }
.ar { width: 0; height: 0; border-style: solid; border-color: transparent; flex: none; }
.ar.down { border-width: 5px 4px 0; border-top-color: #777; margin: 0 2px; }
.ar.right { border-width: 4px 0 4px 5px; border-left-color: #777; margin-left: 2px; }
.l0 .ar { width: 8px; }
.l0 .ar.down { margin: 0 2px 0 1px; }
.l0 .ar.right { margin: 0 4px 0 2px; width: 5px; }
.ricon { margin-left: 10px; width: 16px; flex: none; }
.ricon2 { margin-right: 7px; flex: none; }
.l0 > span { margin-left: 3px; }
.on { color: #3584c9; font-weight: bold; font-size: 12px; }
.swatch { width: 12px; height: 12px; background: #303030; border: 1px solid #111; margin: 0 4px 0 3px; }
.cb { width: 14px; height: 14px; background: #fff; border: 1px solid #bcbcbc; border-radius: 1px; display: block; flex: none; }
.ck { fill: none; stroke: #111; stroke-width: 1.800; }
.ck-b { fill: none; stroke: #2f7fc8; stroke-width: 1.800; }
.desc { margin-top: 4px; height: 79px; flex: none; background: #fff; border: 1px solid #bdbdbd; padding: 6px 3px; display: flex; flex-direction: column; gap: 2px; }
.btnrow { display: flex; }
.b4 { margin-top: 5px; padding-left: 1px; gap: 6px; }
.b4 .btn { width: 80px; }
.btn { height: 23px; background: linear-gradient(#fbfbfb, #e9e9e9); border: 1px solid #b7b7b7; border-radius: 3px; color: #222; padding: 0; font-size: 12px; text-align: center; }
.btn.dis { color: #b0b0b0; }

/* viewport */
.viewwrap { flex: 1; padding: 10px 31px 14px 30px; position: relative; min-width: 0; }
.scene { display: block; width: 1189px; height: 964px; }
.gridl { fill: none; stroke: #7d7d7d; stroke-width: 1; vector-effect: non-scaling-stroke; }
.car-body { fill: #484848; fill-opacity: .5; }
.car-light { fill: #6a6a6a; fill-opacity: .38; }
.car-cabin { fill: #101010; fill-opacity: .72; }
.car-dark { fill: #000; fill-opacity: .4; }
.tyre { fill: #161616; fill-opacity: .68; }
.rim { fill: #6a6a6a; fill-opacity: .5; }
.spoke { fill: none; stroke: #1e1e1e; stroke-width: 11; stroke-dasharray: 7 14; stroke-opacity: .7; }
.s-small { stroke-width: 8; stroke-dasharray: 5 10; }
.yl { fill: none; stroke: #b0b040; stroke-width: 1; stroke-opacity: .4; }
.yl2 { fill: none; stroke: #b8b840; stroke-width: 1; stroke-opacity: .55; }
.chassis { fill: #8c1f78; fill-opacity: .5; }
.db, .dr, .dg, .ab, .ar2, .adr, .ag, .adg, .apk { fill: none; stroke-linecap: round; }
.db { stroke: #14148c; stroke-width: 1.600; }
.dr { stroke: #741010; stroke-width: 1.600; }
.dg { stroke: #0d680d; stroke-width: 1.600; }
.ab { stroke: #0000e6; stroke-width: 3; }
.ar2 { stroke: #e00000; stroke-width: 3; }
.adr { stroke: #a00000; stroke-width: 3; }
.apk { stroke: #b05050; stroke-width: 3; }
.ag { stroke: #00cc00; stroke-width: 3; }
.adg { stroke: #008a00; stroke-width: 2.500; }
.lbls text { font-family: "Liberation Sans", sans-serif; fill: #e6e6e6; }
.splitdots { position: absolute; left: 2px; top: 485px; width: 2px; height: 18px; background: repeating-linear-gradient(#aaa 0 1px, transparent 1px 3px); }
.collapse { position: absolute; right: 12px; top: 488px; width: 0; height: 0; border: 4px solid transparent; border-left: 5px solid #555; border-right: 0; }
.hsplit { position: absolute; left: 578px; bottom: 2px; width: 18px; height: 2px; background: repeating-linear-gradient(90deg, #aaa 0 1px, transparent 1px 3px); }

/* views */
.views { width: 271px; padding-top: 1px; display: flex; flex-direction: column; flex: none; }
.vh { gap: 5px; padding-left: 4px; width: 270px; height: 22px; }
.vh span:not(.closebtn) { margin-left: 2px; }
.vh .closebtn { right: 1px; }
.typerow { height: 37px; display: flex; align-items: center; gap: 6px; padding-left: 2px; padding-bottom: 8px; padding-top: 7px; flex: none; }
.combo { width: 143px; height: 22px; border: 1px solid #b7b7b7; border-radius: 3px; background: linear-gradient(#fbfbfb, #ededed); display: flex; align-items: center; padding-left: 4px; overflow: hidden; position: relative; }
.combotxt { width: 117px; overflow: hidden; white-space: nowrap; line-height: 1.4; }
.comboar { position: absolute; right: 8px; top: 9px; width: 0; height: 0; border: 4px solid transparent; border-top: 4px solid #777; border-bottom: 0; }
.zero { width: 80px; height: 22px; }
.vtree { height: 892px; flex: none; background: #fff; border: 1px solid #bdbdbd; display: flex; flex-direction: column; }
.vrow { display: grid; grid-template-columns: 134px 1fr; height: 15px; flex: none; }
.vrow.fill { flex: 1; }
.vn { padding-left: 43px; display: flex; align-items: center; border-right: 1px solid #d6d6d6; white-space: nowrap; position: relative; }
.vv { display: flex; align-items: center; padding-left: 3px; white-space: nowrap; }
.hd { font-weight: bold; }
.v0 { padding-left: 6px; }
.v0 .ar { margin: 0 9px 0 0; }
.v1 { padding-left: 29px; }
.v1 .ar { margin: 0 9px 0 0; }
.b3 { margin-top: 6px; padding-left: 2px; gap: 6px; }
.b3 .btn { width: 85px; }

/* time */
.timepanel { flex: 1; display: flex; flex-direction: column; }
.th { height: 22px; padding-left: 4px; gap: 6px; }
.th .closebtn { right: 2px; top: 2px; }
.timerow { height: 37px; display: flex; align-items: center; padding: 3px 0 0 10px; gap: 7px; flex: none; }
.tinput { width: 124px; height: 22px; background: #fff; border: 1px solid #bcbcbc; border-radius: 3px; padding-left: 3px; display: flex; align-items: center; }
.exp { margin-left: auto; padding-right: 18px; display: flex; align-items: center; gap: 5px; }
.statusrow { flex: 1; display: flex; align-items: flex-start; padding: 6px 2px 0 2px; position: relative; }
.reset { width: 50px; height: 23px; }
.hint { margin: 5px 0 0 6px; }
.fps { margin-left: auto; margin-top: 1px; }

/* joint state publisher window */
.jsp { position: absolute; left: 410px; top: 140px; width: 259px; height: 648px; background: #eeeeee; border-radius: 7px 7px 0 0; box-shadow: 0 2px 14px rgba(0,0,0,.6); border: 1px solid #222; border-top: 0; }
.jsp-title { height: 38px; background: #2c2c2c; border-radius: 7px 7px 0 0; position: relative; margin: 0 -1px; }
.jsp-name { position: absolute; left: 9px; top: 10px; font: bold 14.500px "Open Sans", sans-serif; color: #f2f2f2; white-space: nowrap; }
.jsp-min { position: absolute; left: 169px; top: 21px; width: 8px; height: 1.500px; background: #eee; }
.jsp-max { position: absolute; left: 203px; top: 15px; width: 8px; height: 8px; border: 1px solid #eee; }
.jsp-close { position: absolute; left: 232px; top: 10px; width: 18px; height: 18px; border-radius: 50%; background: #e95420; display: flex; align-items: center; justify-content: center; }
.jsp-body { padding: 9px 9px 0; display: flex; flex-direction: column; gap: 6px; }
.jbtn { width: 240px; height: 23px; font-size: 12px; }
.jbox { height: 535px; border: 1px solid #b5b5b5; padding: 18px 18px 0 18px; font: bold 12px "Liberation Sans", sans-serif; color: #111; }
.joint { height: 67px; }
.jtop { height: 22px; display: flex; align-items: center; justify-content: space-between; }
.jval { width: 45px; height: 22px; background: #fff; border: 1px solid #bcbcbc; border-radius: 3px; display: flex; align-items: center; justify-content: flex-end; padding-right: 4px; font-size: 12px; margin-right: 1px; }
.slider { margin: 11px 1px 0 1px; height: 5px; width: 198px; background: #d4d4d4; border: 1px solid #b4b4b4; border-radius: 2px; display: flex; align-items: center; }
.fillbar { height: 5px; background: #3b9bdc; border: 1px solid #1f6ea5; border-radius: 2px; flex: none; }
.knob { width: 14px; height: 13px; background: linear-gradient(#fff, #ececec); border: 1px solid #b4b4b4; border-radius: 3px; flex: none; margin-left: -1px; }
.fillbar[style="width:100%"] { margin-right: -12px; }
.fillbar[style="width:0%"] { display: none; }
```
